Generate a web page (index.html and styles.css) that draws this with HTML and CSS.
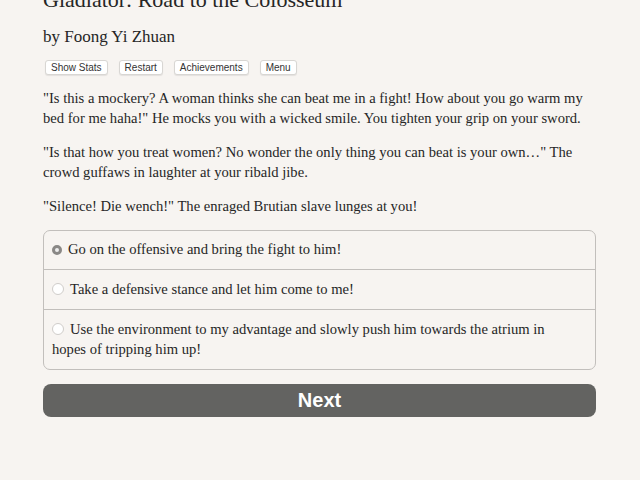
FILE: index.html
```html
<!DOCTYPE html>
<html lang="en">
<head>
  <meta charset="UTF-8">
  <meta name="viewport" content="width=device-width, initial-scale=1.0">
  <title>Gladiator: Road to the Colosseum</title>
  <link rel="stylesheet" href="styles.css">
</head>
<body>
  <div id="container">
    <h1 class="game-title">Gladiator: Road to the Colosseum</h1>
    <h2 class="author">by Foong Yi Zhuan</h2>
    <div class="button-bar">
      <button class="small-btn">Show Stats</button>
      <button class="small-btn">Restart</button>
      <button class="small-btn">Achievements</button>
      <button class="small-btn">Menu</button>
    </div>

    <div id="text">
      <p>"Is this a mockery? A woman thinks she can beat me in a fight! How about you go warm my bed for me haha!" He mocks you with a wicked smile. You tighten your grip on your sword.</p>
      <p>"Is that how you treat women? No wonder the only thing you can beat is your own…" The crowd guffaws in laughter at your ribald jibe.</p>
      <p>"Silence! Die wench!" The enraged Brutian slave lunges at you!</p>
    </div>

    <form class="choice">
      <label class="choice-row"><span class="radio checked"></span>Go on the offensive and bring the fight to him!</label>
      <label class="choice-row"><span class="radio"></span>Take a defensive stance and let him come to me!</label>
      <label class="choice-row"><span class="radio"></span>Use the environment to my advantage and slowly push him towards the atrium in hopes of tripping him up!</label>
    </form>

    <button class="next-btn">Next</button>
  </div>
</body>
</html>
```

FILE: styles.css
```css
body {
  margin: 0;
  background-color: #f7f4f1;
  font-family: 'Liberation Serif', 'DejaVu Serif', serif;
  color: #262626;
}

#container {
  width: 553px;
  margin-left: 43px;
  margin-top: -13px;
}

.game-title {
  font-size: 22px;
  font-weight: normal;
  line-height: 26px;
  margin: 0;
}

.author {
  font-size: 17px;
  font-weight: normal;
  line-height: 20px;
  margin: 14px 0 0 0;
}

.button-bar {
  display: flex;
  gap: 11px;
  margin-top: 13px;
  padding-left: 2px;
}

.small-btn {
  font-family: 'Liberation Sans', Arial, sans-serif;
  font-size: 10px;
  color: #333;
  background-color: #fff;
  border: 1px solid #d8d6d3;
  border-radius: 3px;
  padding: 1px 5px;
  height: 15px;
  line-height: 11px;
  box-shadow: 0 1px 1px rgba(0, 0, 0, 0.08);
}

#text {
  margin-top: 13px;
  font-size: 14.6px;
  line-height: 20px;
}

#text p {
  margin: 0 0 14px 0;
}

.choice {
  margin-top: 14px;
  border: 1px solid #c2bfbc;
  border-radius: 7px;
  font-size: 14.6px;
  line-height: 20px;
}

.choice-row {
  display: block;
  padding: 9px 36px 10px 8px;
  border-top: 1px solid #c2bfbc;
}

.choice-row:first-child {
  border-top: none;
  padding-top: 8px;
}

.radio {
  display: inline-block;
  width: 10px;
  height: 10px;
  border: 1px solid #d0cdca;
  border-radius: 50%;
  background-color: #fff;
  margin-right: 6px;
  vertical-align: -1px;
}

.radio.checked {
  border: 3px solid #8a8886;
  width: 4px;
  height: 4px;
  background-color: #eee;
}

.next-btn {
  display: block;
  width: 100%;
  margin-top: 14px;
  height: 33px;
  background-color: #636361;
  color: #fff;
  border: none;
  border-radius: 8px;
  font-family: 'Liberation Sans', Arial, sans-serif;
  font-weight: bold;
  font-size: 20px;
}
```
